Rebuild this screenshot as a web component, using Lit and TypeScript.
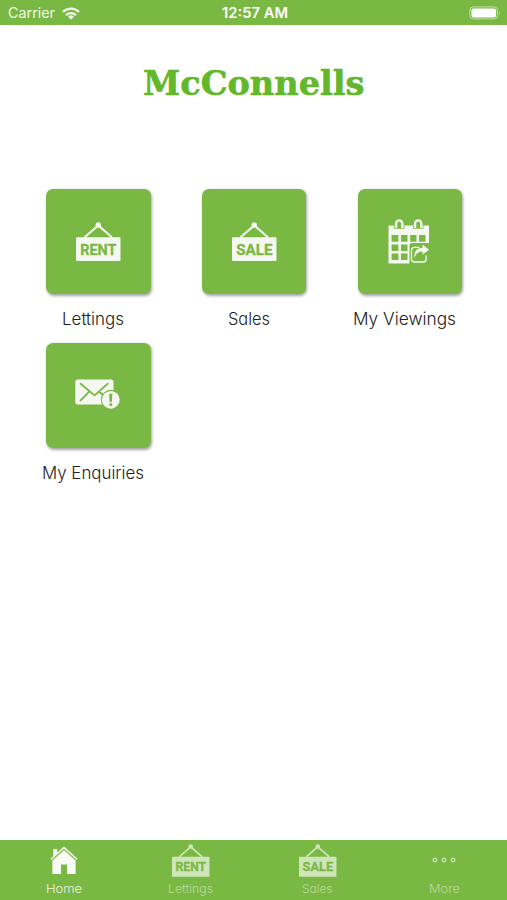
import { LitElement, html, svg, css } from "lit";
import { customElement } from "lit/decorators.js";
import { classMap } from "lit/directives/class-map.js";

const sign = (word: string) => svg`
  <svg class="sign" viewBox="0 0 44 39">
    <path d="M8.5 15.2 22 3.4 35.5 15.2" fill="none" stroke="currentColor" stroke-width="2"/>
    <circle cx="22" cy="2.9" r="2.7" fill="currentColor"/>
    <rect y="15" width="44" height="23.6" rx=".8" fill="currentColor"/>
    <text x="4.2" y="32.2" textLength="35.8" lengthAdjust="spacingAndGlyphs">${word}</text>
  </svg>`;

const calendar = svg`
  <svg class="calendar" viewBox="0 0 42 45">
    <g fill="none" stroke="currentColor" stroke-width="2.4">
      <path d="M8 9V4.6a3 3 0 0 1 6.4 0V9M27 9V4.6a3 3 0 0 1 6.4 0V9"/>
    </g>
    <path fill="currentColor" d="M.5 6.5H6v3.2h10.4V6.5H25v3.2h10.4V6.5H41V24H24q-2.5 0-2.5 3v17.5H.5z"/>
    <g class="cut">
      <path d="M3.6 16h6.8v6.8H3.6zM13 16h6.5v6.8H13zM22.2 16h6.3v6.8h-6.3zM31 16h6.5v6.8H31zM3.6 25.4h6.8v6.5H3.6zM13 25.4h6.5v6.5H13zM3.6 34.6h6.8v6.5H3.6zM13 34.6h6.5v6.5H13z"/>
    </g>
    <path d="M31.5 28.3h-5a3 3 0 0 0-3 3v8.7a3 3 0 0 0 3 3h8.6a3 3 0 0 0 3-3v-3.7" fill="none" stroke="currentColor" stroke-width="1.3"/>
    <path fill="currentColor" d="M34.5 25.6 41 30.8l-6.5 5v-3.2c-4 0-6.3 1.7-8.1 6.7-.5-7.3 2.5-10.5 8.1-10.6z"/>
  </svg>`;

const envelope = svg`
  <svg class="envelope" viewBox="0 0 45 31">
    <rect x=".3" y=".4" width="38.2" height="25" rx="2.5" fill="currentColor"/>
    <path d="m5 4.2 14.6 12.2L33.3 4.2M5 22l9.2-9.3M24 12.7l4 3.3" class="fold"/>
    <circle cx="35.8" cy="20.8" r="10" class="cut"/>
    <circle cx="35.8" cy="20.8" r="8.9" fill="currentColor"/>
    <path class="cut" d="M34.2 14.7h3.2l-.5 8.2h-2.2z"/>
    <circle cx="35.8" cy="25.6" r="1.5" class="cut"/>
  </svg>`;

const house = svg`
  <svg class="house" viewBox="0 0 28 29">
    <path d="M3.3 3h4v4.2l-4 3.6z" fill="currentColor"/>
    <path d="m1 13.2 13-11.6 13 11.6" fill="none" stroke="currentColor" stroke-width="1.5"/>
    <path d="M14 4.2 25.6 14.6V28H17V18.5h-6V28H2.4V14.6z" fill="currentColor"/>
  </svg>`;

const dots = svg`
  <svg class="dots" viewBox="0 0 24 6">
    <g fill="none" stroke="currentColor" stroke-width="1.3">
      <circle cx="3" cy="3" r="1.8"/><circle cx="12" cy="3" r="1.8"/><circle cx="21" cy="3" r="1.8"/>
    </g>
  </svg>`;

const label = (text: string, width: number, size: number) => svg`
  <svg class="label" width=${width} height=${size * 1.5}>
    <text y=${size} font-size=${size} textLength=${width} lengthAdjust="spacingAndGlyphs">${text}</text>
  </svg>`;

@customElement("app-root")
export class AppRoot extends LitElement {
  static styles = css`
    :host {
      display: flex;
      flex-direction: column;
      height: 900px;
      background: #fff;
      font-family: Inter, "Liberation Sans", sans-serif;
      --green: #79b843;
    }
    svg { display: block; overflow: visible; }
    .status {
      height: 25px;
      flex: none;
      display: grid;
      grid-template-columns: 1fr auto 1fr;
      align-items: center;
      padding: 1px 6px 0 8px;
      box-sizing: border-box;
      background: var(--green);
      color: #fff;
    }
    .carrier { display: flex; align-items: center; gap: 7px; color: #f0f7e9; }
    .status .label { margin-top: 3px; }
    .wifi { width: 18px; height: 13px; }
    .time { font-weight: 600; }
    .battery { width: 32px; height: 14px; justify-self: end; }
    .logo { width: 221px; height: 36px; margin: 37px auto 0 143px; flex: none; }
    .logo text {
      font: bold 33.5px "DejaVu Serif", serif;
      fill: #62b72a;
      stroke: #62b72a;
      stroke-width: .6;
    }
    .grid {
      flex: 1;
      display: grid;
      grid-template-columns: repeat(3, 155.8px);
      grid-auto-rows: 154px;
      padding: 91px 0 0 15px;
    }
    .cell { display: flex; flex-direction: column; align-items: center; }
    .tile {
      width: 104.5px;
      height: 104.5px;
      margin-left: 11px;
      border-radius: 7px;
      background: var(--green);
      color: #f5f8f1;
      box-shadow: 1px 1.5px 3px rgba(0, 0, 0, .36);
      display: flex;
      align-items: center;
      justify-content: center;
    }
    .label text { fill: currentColor; }
    .cell .label { margin-top: 14.5px; color: #222; }
    .cell .label text, .tab .label text { font-feature-settings: "cv11"; font-weight: 350; }
    .sign { width: 44.5px; height: 39.4px; }
    .sign text {
      font: bold 14.6px Roboto, sans-serif;
      fill: var(--green);
      stroke: var(--green);
      stroke-width: .3;
    }
    .cut { fill: var(--green); }
    .fold { fill: none; stroke: var(--green); stroke-width: 1.8; }
    .calendar { width: 42px; height: 45px; margin-right: 1px; }
    .envelope { width: 45px; height: 31px; margin: -1px 1px 0 0; }
    .tabs {
      height: 60.5px;
      flex: none;
      display: grid;
      grid-template-columns: repeat(4, 1fr);
      background: var(--green);
    }
    .tab { display: flex; flex-direction: column; align-items: center; color: #cfe5b9; padding-left: 1px; }
    .tab.active { color: #f8fbf5; }
    .glyph { height: 41.5px; display: flex; align-items: center; }
    .tab .sign { width: 37.5px; height: 33.2px; margin-top: 1px; }
    .house { width: 28px; height: 29px; }
    .dots { width: 24px; height: 6px; }
    .tab .label { color: #b9da9b; }
    .tab.active .label { color: #eaf4e0; }
  `;

  private tiles = [
    { name: "Lettings", width: 62, icon: sign("RENT") },
    { name: "Sales", width: 42, icon: sign("SALE") },
    { name: "My Viewings", width: 103, icon: calendar },
    { name: "My Enquiries", width: 102, icon: envelope },
  ];

  private tabs = [
    { name: "Home", width: 36, icon: house, active: true },
    { name: "Lettings", width: 45, icon: sign("RENT"), active: false },
    { name: "Sales", width: 30.5, icon: sign("SALE"), active: false },
    { name: "More", width: 31, icon: dots, active: false },
  ];

  render() {
    return html`
      <div class="status">
        <div class="carrier">
          ${label("Carrier", 47, 14)}
          <svg class="wifi" viewBox="0 0 18 13">
            <g fill="none" stroke="currentColor" stroke-width="2.3">
              <path d="M1 5a11.3 11.3 0 0 1 16 0M4 8.2a7.1 7.1 0 0 1 10 0"/>
            </g>
            <path d="M9 12.8 6.1 9.8a4.1 4.1 0 0 1 5.8 0z" fill="currentColor"/>
          </svg>
        </div>
        <div class="time">${label("12:57 AM", 66, 14)}</div>
        <svg class="battery" viewBox="0 0 32 14">
          <rect x=".9" y=".9" width="27.6" height="12" rx="3.3" fill="none" stroke="#c5dfac" stroke-width="1"/>
          <rect x="2.5" y="2.4" width="24.6" height="9" rx="1.8" fill="#fff"/>
          <path d="M30 4.8q1.7 2 0 4.2z" fill="#c5dfac"/>
        </svg>
      </div>
      <svg class="logo">
        <text y="32.5" textLength="221.5" lengthAdjust="spacingAndGlyphs">McConnells</text>
      </svg>
      <div class="grid">
        ${this.tiles.map((t) => html`
          <div class="cell">
            <div class="tile">${t.icon}</div>
            ${label(t.name, t.width, 17.3)}
          </div>`)}
      </div>
      <div class="tabs">
        ${this.tabs.map((t) => html`
          <div class=${classMap({ tab: true, active: t.active })}>
            <div class="glyph">${t.icon}</div>
            ${label(t.name, t.width, 11.8)}
          </div>`)}
      </div>
    `;
  }
}
